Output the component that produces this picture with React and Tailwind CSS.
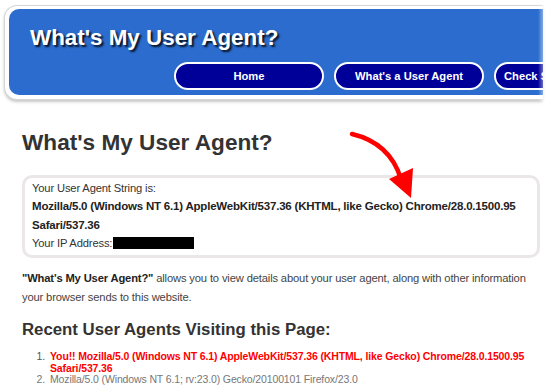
export default function App() {
  return (
    <div className="relative w-[550px] h-[387px] overflow-hidden bg-white font-['Liberation_Sans',Arial,sans-serif]">
      {/* Header */}
      <div className="relative pt-[5px] pl-[4px]">
        <div className="w-[539px] rounded-l-[13px] border border-r-0 border-[#d6d6d6] bg-white pt-[3px] pl-[4px] pb-[4px] shadow-[0_2px_3px_rgba(0,0,0,0.22)]">
          <div className="h-[86px] overflow-hidden rounded-l-[10px] bg-[#2c6cce] pt-[18px] pl-[21px]">
            <div className="text-[22.4px] leading-none font-bold text-white whitespace-nowrap [text-shadow:2px_2px_2px_rgba(0,0,0,0.85)]">
              What's My User Agent?
            </div>
            <div className="mt-[13px] ml-[144px] flex gap-[10px]">
              <div className="flex h-[28px] w-[150px] shrink-0 items-center justify-center rounded-full border-2 border-white bg-[#000099] text-[11.2px] font-bold text-white whitespace-nowrap">
                Home
              </div>
              <div className="flex h-[28px] w-[150px] shrink-0 items-center justify-center rounded-full border-2 border-white bg-[#000099] text-[11.2px] font-bold text-white whitespace-nowrap">
                What's a User Agent
              </div>
              <div className="flex h-[28px] w-[150px] shrink-0 items-center justify-start rounded-full border-2 border-white bg-[#000099] pl-[8px] text-[11.2px] font-bold text-white whitespace-nowrap">
                Check Someone's Agent
              </div>
            </div>
          </div>
        </div>
        <div className="absolute right-0 top-0 h-[110px] w-[12px] bg-gradient-to-r from-transparent to-white" />
      </div>

      {/* Main */}
      <div className="relative px-[22px]">
        <h1 className="mt-[32px] text-[22.6px] leading-none font-bold text-[#333]">
          What's My User Agent?
        </h1>
        <div className="mt-[20px] w-[518px] rounded-[10px] border-[3px] border-[#ebe7e7] pl-[7px] pt-[1px] pb-[2px] text-[11.2px] leading-[18.5px] tracking-[-0.15px] text-[#333]">
          <div>Your User Agent String is:</div>
          <div className="text-[11.5px] tracking-[-0.2px] font-bold text-[#222] whitespace-nowrap">
            Mozilla/5.0 (Windows NT 6.1) AppleWebKit/537.36 (KHTML, like Gecko) Chrome/28.0.1500.95
            <br />
            Safari/537.36
          </div>
          <div className="flex items-center">
            Your IP Address:
            <span className="ml-[1px] inline-block h-[12px] w-[81px] bg-black" />
          </div>
        </div>
        <p className="mt-[11px] text-[11.2px] leading-[19px] tracking-[-0.15px] text-[#444] whitespace-nowrap">
          <b className="text-[#222]">"What's My User Agent?"</b> allows you to view details about your user agent, along with other information
          <br />
          your browser sends to this website.
        </p>
        <h2 className="mt-[15px] text-[16.8px] leading-none font-bold text-[#333]">
          Recent User Agents Visiting this Page:
        </h2>
        <ol className="mt-[13px] text-[10.5px] leading-[11.5px] tracking-[-0.13px]">
          <li className="flex">
            <span className="w-[28px] shrink-0 pr-[5px] text-right text-[#555]">1.</span>
            <span className="font-bold text-[#ff0000] whitespace-nowrap">
              You!! Mozilla/5.0 (Windows NT 6.1) AppleWebKit/537.36 (KHTML, like Gecko) Chrome/28.0.1500.95
              <br />
              Safari/537.36
            </span>
          </li>
          <li className="flex">
            <span className="w-[28px] shrink-0 pr-[5px] text-right text-[#777]">2.</span>
            <span className="text-[#777] whitespace-nowrap">
              Mozilla/5.0 (Windows NT 6.1; rv:23.0) Gecko/20100101 Firefox/23.0
            </span>
          </li>
        </ol>
      </div>

      {/* Arrow */}
      <svg className="absolute left-0 top-0" width="550" height="387" viewBox="0 0 550 387">
        <path d="M352 134 Q390 143 401 179" fill="none" stroke="#ff0000" strokeWidth="4.5" strokeLinecap="round" />
        <polygon points="389,179 413,168 411,198" fill="#ff0000" />
      </svg>
    </div>
  );
}
